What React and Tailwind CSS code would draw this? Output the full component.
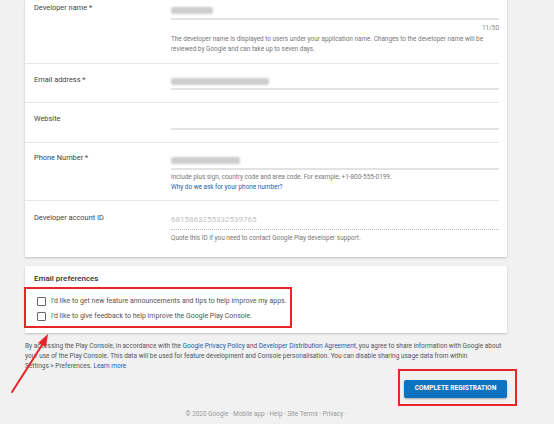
import React from 'react';

const Blur = ({ w }) => (
    <div className={`h-[7px] ${w} rounded-[2px] bg-[#cdcdcd] blur-[1.2px]`} />
);

const Field = ({ label, children, className }) => (
    <div className={`flex border-b border-[#e6e6e6] mr-[8px] ${className}`}>
        <div className="w-[146px] shrink-0 pl-[9px] text-[7.4px] text-[#444]">{label}</div>
        <div className="flex-1">{children}</div>
    </div>
);

export default function App() {
    return (
        <div className="relative w-[554px] h-[424px] overflow-hidden bg-[#f1f1f1] font-['Roboto',sans-serif]">
            <div className="ml-[25px] w-[482px]">
                {/* Account details card */}
                <div className="bg-white shadow-[0_1px_2px_rgba(0,0,0,0.2)] h-[257px]">
                    <Field label="Developer name  *" className="h-[64px] pt-[2px]">
                        <div className="h-[18px] flex items-center border-b-2 border-[#e2e2e2]">
                            <Blur w="w-[42px]" />
                        </div>
                        <div className="text-right text-[6.4px] text-[#888] mt-[4px] leading-[8px]">11/50</div>
                        <div className="text-[6.4px] text-[#777] leading-[10px] mt-[2px] pr-[2px]">
                            The developer name is displayed to users under your application name. Changes to the developer name will be reviewed by Google and can take up to seven days.
                        </div>
                    </Field>
                    <Field label="Email address  *" className="h-[39px] pt-[10px]">
                        <div className="h-[18px] flex items-end pb-[3px] border-b-2 border-[#e2e2e2] -mt-[2px]">
                            <Blur w="w-[98px]" />
                        </div>
                    </Field>
                    <Field label="Website" className="h-[40px] pt-[10px]">
                        <div className="h-[17px] border-b-2 border-[#e2e2e2]" />
                    </Field>
                    <Field label="Phone Number  *" className="h-[58px] pt-[9px]">
                        <div className="h-[18px] flex items-center border-b-2 border-[#e2e2e2]">
                            <Blur w="w-[69px]" />
                        </div>
                        <div className="text-[6.4px] text-[#777] leading-[10px] mt-[2px]">
                            Include plus sign, country code and area code. For example, +1-800-555-0199.
                        </div>
                        <div className="text-[6.4px] text-[#1a5fa8] leading-[10px]">Why do we ask for your phone number?</div>
                    </Field>
                    <div className="flex pt-[11px] mr-[8px]">
                        <div className="w-[146px] shrink-0 pl-[9px] text-[7.4px] text-[#444]">Developer account ID</div>
                        <div className="flex-1">
                            <div className="h-[18px] flex items-end pb-[3px] border-b border-dotted border-[#bbb] text-[8px] text-[#c2c2c2]">
                                6815863255332539765
                            </div>
                            <div className="text-[6.4px] text-[#777] leading-[10px] mt-[3px]">
                                Quote this ID if you need to contact Google Play developer support.
                            </div>
                        </div>
                    </div>
                </div>

                {/* Email preferences card */}
                <div className="mt-[9px] bg-white shadow-[0_1px_2px_rgba(0,0,0,0.2)] h-[67px] pl-[9px] pt-[8px]">
                    <div className="text-[8px] text-[#333] font-medium leading-[10px]">Email preferences</div>
                    <div className="mt-[13px] flex flex-col gap-[6px]">
                        <label className="flex items-center gap-[5px] text-[7px] text-[#555] leading-[9px]">
                            <span className="w-[9px] h-[9px] border border-[#666] rounded-[1px] ml-[3px]" />
                            I'd like to get new feature announcements and tips to help improve my apps.
                        </label>
                        <label className="flex items-center gap-[5px] text-[7px] text-[#555] leading-[9px]">
                            <span className="w-[9px] h-[9px] border border-[#666] rounded-[1px] ml-[3px]" />
                            I'd like to give feedback to help improve the Google Play Console.
                        </label>
                    </div>
                </div>

                {/* Footer text */}
                <p className="mt-[8px] text-[6.5px] leading-[10px] text-[#555] whitespace-nowrap">
                    By accessing the Play Console, in accordance with the <span className="text-[#1a5fa8]">Google Privacy Policy</span> and <span className="text-[#1a5fa8]">Developer Distribution Agreement</span>, you agree to share information with Google about
                    <br />
                    your use of the Play Console. This data will be used for feature development and Console personalisation. You can disable sharing usage data from within
                    <br />
                    Settings &gt; Preferences. <span className="text-[#1a5fa8]">Learn more</span>
                </p>

                <div className="flex justify-end mt-[9px]">
                    <button className="h-[18px] w-[103px] bg-[#0d72c0] text-white text-[6.6px] font-bold rounded-[2px] shadow-[0_1px_2px_rgba(0,0,0,0.3)]">
                        COMPLETE REGISTRATION
                    </button>
                </div>

                <div className="mt-[12px] text-center text-[6.4px] text-[#999]">
                    © 2020 Google · Mobile app · Help · Site Terms · Privacy ·
                </div>
            </div>

            {/* Annotations */}
            <div className="absolute left-[24px] top-[287px] w-[268px] h-[41px] border-2 border-[#e8262a]" />
            <div className="absolute left-[398px] top-[369px] w-[119px] h-[37px] border-2 border-[#e8262a]" />
            <svg className="absolute left-0 top-0" width="554" height="424" viewBox="0 0 554 424">
                <line x1="12" y1="392" x2="44" y2="342" stroke="#e8262a" strokeWidth="2" strokeLinecap="round" />
                <polygon points="48,334 38,343 46,347" fill="#e8262a" />
            </svg>
        </div>
    );
}
